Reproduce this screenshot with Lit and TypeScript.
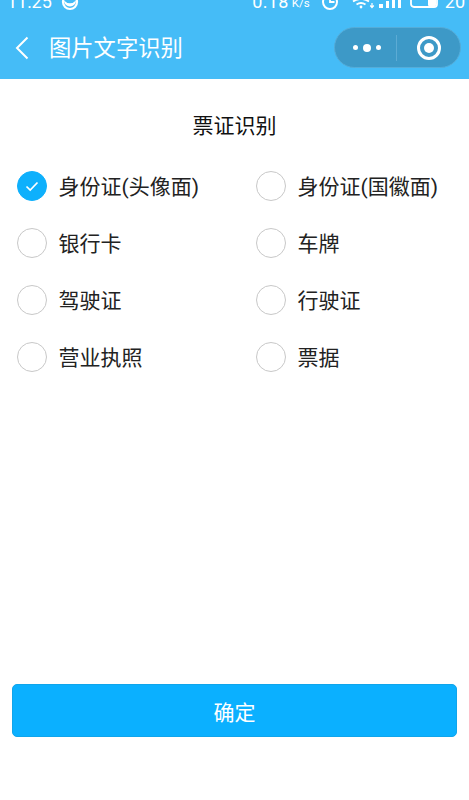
import { LitElement, html, css } from "lit";
import { customElement } from "lit/decorators.js";

const OPTIONS = ["身份证(头像面)", "身份证(国徽面)", "银行卡", "车牌", "驾驶证", "行驶证", "营业执照", "票据"];

@customElement("app-root")
export class AppRoot extends LitElement {
  static styles = css`
    :host {
      display: flex;
      flex-direction: column;
      height: 800px;
      background: #fff;
      font-family: "Roboto", "Noto Sans CJK SC", sans-serif;
      overflow: hidden;
    }
    .top {
      height: 79px;
      flex: none;
      background: #45bcf7;
      color: #fff;
      display: flex;
      flex-direction: column;
      overflow: hidden;
    }
    .status {
      height: 20px;
      flex: none;
      display: flex;
      align-items: flex-end;
      justify-content: space-between;
      overflow: hidden;
      font-size: 18px;
      line-height: 20px;
      padding: 0 4px 8px 7px;
      box-sizing: border-box;
      white-space: nowrap;
    }
    .status > div { display: flex; align-items: center; height: 20px; flex: none; }
    .left { gap: 9px; }
    .num { letter-spacing: 0.4px; }
    .unit { font-size: 11.500px; margin-left: 3px; position: relative; top: 1px; }
    .clock { margin-left: 11px; }
    .wifi { margin-left: 13px; }
    .signal { margin-left: 3px; }
    .battery { margin-left: 9px; }
    .level { margin-left: 7px; }
    .nav {
      flex: 1;
      display: flex;
      align-items: center;
      padding: 0 8px 4px 14px;
    }
    .back { width: 16px; height: 26px; flex: none; }
    .title { margin-left: 19px; font-size: 22.300px; line-height: 30px; flex: 1; font-weight: 400; }
    .capsule {
      width: 127px;
      height: 41px;
      box-sizing: border-box;
      border-radius: 21px;
      background: #3d99c7;
      border: 1px solid #55acd8;
      display: flex;
      align-items: center;
      flex: none;
    }
    .cap-l { flex: 1; display: flex; justify-content: center; align-items: center; gap: 5px; padding-left: 2px; }
    .dot { width: 5px; height: 5px; border-radius: 50%; background: #fff; }
    .dot.big { width: 8px; height: 8px; }
    .sep { width: 1px; height: 26px; background: #5cabd4; flex: none; }
    .cap-r { width: 63px; display: flex; justify-content: center; align-items: center; flex: none; }
    .target {
      width: 24px; height: 24px; box-sizing: border-box;
      border: 3px solid #fff; border-radius: 50%;
      display: flex; align-items: center; justify-content: center;
    }
    .target i { width: 10px; height: 10px; border-radius: 50%; background: #fff; }
    main { flex: 1; display: flex; flex-direction: column; padding: 0 12px; }
    h1 {
      margin: 33px 0 0;
      font-size: 21px;
      line-height: 28px;
      font-weight: 400;
      text-align: center;
      color: #111;
    }
    .grid {
      margin-top: 17px;
      display: grid;
      grid-template-columns: 239px 1fr;
      grid-auto-rows: 57px;
      padding-left: 5px;
    }
    .opt { display: flex; align-items: center; gap: 11.500px; font-size: 21px; color: #222; white-space: nowrap; }
    .label { padding-bottom: 2px; }
    .radio {
      width: 30px; height: 30px; box-sizing: border-box; flex: none;
      border-radius: 50%; border: 1.700px solid #c8c8c8; background: #fff;
      display: flex; align-items: center; justify-content: center;
    }
    .radio.on { background: #0eb0fc; border-color: #0eb0fc; }
    .radio svg { width: 18px; height: 18px; }
    .spacer { flex: 1; }
    button {
      height: 53px;
      margin-bottom: 63px;
      border: 1px solid #10a5eb;
      border-radius: 5px;
      background: #0bb0ff;
      color: #fff;
      font: inherit;
      font-size: 21px;
      padding: 0;
    }
  `;

  render() {
    return html`
      <div class="top">
        <div class="status">
          <div class="left">
            <span>11:25</span>
            <svg width="18" height="20" viewBox="0 0 18 20"><circle cx="9" cy="10" r="7" fill="none" stroke="#fff" stroke-width="2.200"/><path d="M3 8.500a6 6 0 0 0 12 0a8 8 0 0 1-12 0z" fill="#fff"/></svg>
          </div>
          <div>
            <span class="num">0.18</span><span class="unit">K/s</span>
            <svg class="clock" width="18" height="20" viewBox="0 0 18 20"><circle cx="9" cy="10" r="7" fill="none" stroke="#fff" stroke-width="2"/><path d="M9 5v5h4.500" fill="none" stroke="#fff" stroke-width="1.800"/></svg>
            <svg class="wifi" width="24" height="20" viewBox="0 0 24 20" fill="none" stroke="#fff" stroke-width="1.800"><path d="M1 9.500q8-5 16 0M4.500 12.500q4.500-3 9 0"/><circle cx="9" cy="15" r="1.400" fill="#fff" stroke="none"/><path d="M20 11v4.500M18.200 13.500l1.800 2l1.800-2" stroke-width="1.200"/></svg>
            <svg class="signal" width="22" height="20" viewBox="0 0 22 20" fill="#fff"><rect x="0" y="12" width="4" height="4"/><rect x="7" y="9" width="3" height="7"/><rect x="13" y="5" width="3" height="11"/><rect x="19" y="3" width="3" height="13"/></svg>
            <svg class="battery" width="28" height="20" viewBox="0 0 28 20"><rect x="1" y="3" width="26" height="12" rx="3" fill="none" stroke="#fff" stroke-width="1.800"/><rect x="18" y="3" width="8" height="11" rx="1" fill="#fff"/></svg>
            <span class="level">20</span>
          </div>
        </div>
        <div class="nav">
          <svg class="back" viewBox="0 0 16 26"><path d="M13.500 2.500L3 13l10.500 10.500" fill="none" stroke="#fff" stroke-width="2"/></svg>
          <div class="title">图片文字识别</div>
          <div class="capsule">
            <div class="cap-l"><span class="dot"></span><span class="dot big"></span><span class="dot"></span></div>
            <div class="sep"></div>
            <div class="cap-r"><div class="target"><i></i></div></div>
          </div>
        </div>
      </div>
      <main>
        <h1>票证识别</h1>
        <div class="grid">
          ${OPTIONS.map((o, i) => html`
            <div class="opt">
              <span class="radio ${i === 0 ? "on" : ""}">
                ${i === 0 ? html`<svg viewBox="0 0 18 18"><path d="M3.500 9.500l3.700 3.500l7.300-7.500" fill="none" stroke="#fff" stroke-width="1.700"/></svg>` : ""}
              </span>
              <span class="label">${o}</span>
            </div>`)}
        </div>
        <div class="spacer"></div>
        <button>确定</button>
      </main>
    `;
  }
}
